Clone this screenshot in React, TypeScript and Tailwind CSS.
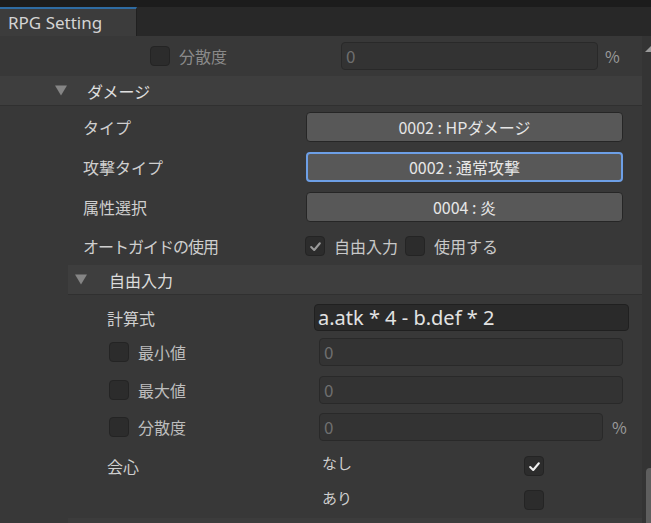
import React from 'react';

const FONT = { fontFamily: '"Noto Sans CJK JP", "Noto Sans", sans-serif' };

// チェックボックス (Unity風)
const Check = ({ checked = false, dim = false }: { checked?: boolean; dim?: boolean }) => (
  <div className="w-[20px] h-[20px] shrink-0 rounded-[4px] bg-[#2c2c2c] border border-[#242424] flex items-center justify-center">
    {checked && (
      <svg width="13" height="13" viewBox="0 0 12 12">
        <path d="M2 6.5 L4.8 9.2 L10 3" fill="none" stroke={dim ? '#9a9a9a' : '#f0f0f0'} strokeWidth="1.9" strokeLinecap="round" strokeLinejoin="round" />
      </svg>
    )}
  </div>
);

const Tri = () => (
  <svg width="12" height="11" viewBox="0 0 12 11" className="shrink-0">
    <path d="M0 0.5 L12 0.5 L6 10.5 Z" fill="#858585" />
  </svg>
);

const Popup = ({ text, focused = false }: { text: string; focused?: boolean }) => (
  <div
    className={`h-[30px] w-[317px] ml-auto rounded-[4px] bg-[#585858] flex items-center justify-center text-[16px] text-[#e6e6e6] whitespace-pre ${
      focused ? 'border-2 border-[#6d9fe6]' : 'border border-[#262626]'
    }`}
  >
    {text}
  </div>
);

const DisabledField = ({ width }: { width: number }) => (
  <div
    className="h-[28px] rounded-[4px] bg-[#333333] border border-[#292929] flex items-center pl-[4px] text-[17px] text-[#6f6f6f]"
    style={{ width }}
  >
    0
  </div>
);

export default function App() {
  return (
    <div className="w-[651px] h-[523px] bg-[#383838] overflow-hidden flex flex-col text-[#cfcfcf]" style={FONT}>
      {/* タブバー */}
      <div className="h-[7px] bg-[#1c1c1c]" />
      <div className="h-[29px] bg-[#282828] flex">
        <div className="w-[137px] bg-[#3c3c3c] border-t-2 border-[#2f6ca3] border-r border-r-[#202020] flex items-center pl-[8px] text-[17px] text-[#d4d4d4]" style={{ fontFamily: '"Noto Sans", sans-serif' }}>
          RPG Setting
        </div>
      </div>

      <div className="flex flex-1 relative">
        <div className="flex-1 flex flex-col">
          {/* 分散度 (disabled) */}
          <div className="h-[40px] flex items-center">
            <div className="w-[150px]" />
            <Check />
            <span className="ml-[9px] text-[16px] text-[#8a8a8a] w-[162px]">分散度</span>
            <DisabledField width={257} />
            <span className="ml-[7px] text-[16px] text-[#9a9a9a]">%</span>
          </div>

          {/* ダメージ header */}
          <div className="h-[30px] bg-[#3e3e3e] border-b border-[#303030] flex items-center">
            <div className="w-[55px]" />
            <Tri />
            <span className="ml-[20px] text-[16px] text-[#e0e0e0]">ダメージ</span>
          </div>

          <div className="flex flex-col pr-[19px] pt-[6px] gap-[10px]">
            <div className="flex items-center">
              <span className="pl-[83px] text-[16px]">タイプ</span>
              <Popup text="0002 : HPダメージ" />
            </div>
            <div className="flex items-center">
              <span className="pl-[83px] text-[16px]">攻撃タイプ</span>
              <Popup text="0002 : 通常攻撃" focused />
            </div>
            <div className="flex items-center">
              <span className="pl-[83px] text-[16px]">属性選択</span>
              <Popup text="0004 : 炎" />
            </div>
          </div>

          <div className="h-[28px] mt-[10px] flex items-center">
            <span className="pl-[83px] w-[305px] text-[16px] tracking-[-1px]">オートガイドの使用</span>
            <Check checked dim />
            <span className="ml-[9px] text-[16px] text-[#c8c8c8]">自由入力</span>
            <div className="ml-[7px]"><Check /></div>
            <span className="ml-[9px] text-[16px] text-[#c8c8c8]">使用する</span>
          </div>

          {/* 自由入力 header */}
          <div className="ml-[68px] mt-[5px] h-[30px] bg-[#3e3e3e] border-b border-[#303030] flex items-center">
            <div className="w-[7px]" />
            <Tri />
            <span className="ml-[22px] text-[16px] text-[#dcdcdc]">自由入力</span>
          </div>

          <div className="mt-[9px] flex items-center">
            <span className="pl-[107px] w-[314px] text-[16px]">計算式</span>
            <div className="h-[27px] w-[315px] rounded-[4px] bg-[#2a2a2a] border border-[#202020] flex items-center pl-[3px] text-[20px] text-[#e2e2e2]" style={{ fontFamily: '"Noto Sans", sans-serif' }}>
              a.atk * 4 - b.def * 2
            </div>
          </div>

          {[
            { label: '最小値', w: 304, mt: 'mt-[7px]', pct: false },
            { label: '最大値', w: 304, mt: 'mt-[10px]', pct: false },
            { label: '分散度', w: 284, mt: 'mt-[9px]', pct: true },
          ].map(r => (
            <div key={r.label} className={`${r.mt} flex items-center`}>
              <div className="w-[109px]" />
              <Check />
              <span className="ml-[9px] w-[181px] text-[16px] text-[#bdbdbd]">{r.label}</span>
              <DisabledField width={r.w} />
              {r.pct && <span className="ml-[9px] text-[16px] text-[#9a9a9a]">%</span>}
            </div>
          ))}

          <div className="mt-[12px] h-[26px] flex items-center">
            <span className="pl-[107px] w-[322px] text-[16px]">会心</span>
            <span className="w-[202px] text-[15px] -mt-[6px]">なし</span>
            <Check checked />
          </div>
          <div className="mt-[8px] h-[26px] flex items-center">
            <span className="w-[322px]" />
            <span className="w-[202px] text-[15px] -mt-[4px]">あり</span>
            <Check />
          </div>
          <div className="mt-auto ml-[68px] h-[5px] bg-[#3c3c3c]" />
        </div>

        {/* スクロールバー */}
        <div className="w-[9px] bg-[#343434] flex flex-col items-end">
          <svg width="6" height="6" viewBox="0 0 6 6" className="mt-[10px]">
            <path d="M0 6 L6 6 L6 0 Z" fill="#9a9a9a" />
          </svg>
          <div className="mt-auto w-[5px] h-[55px] rounded-tl-[4px] bg-[#5e5e5e]" />
        </div>
      </div>
    </div>
  );
}
